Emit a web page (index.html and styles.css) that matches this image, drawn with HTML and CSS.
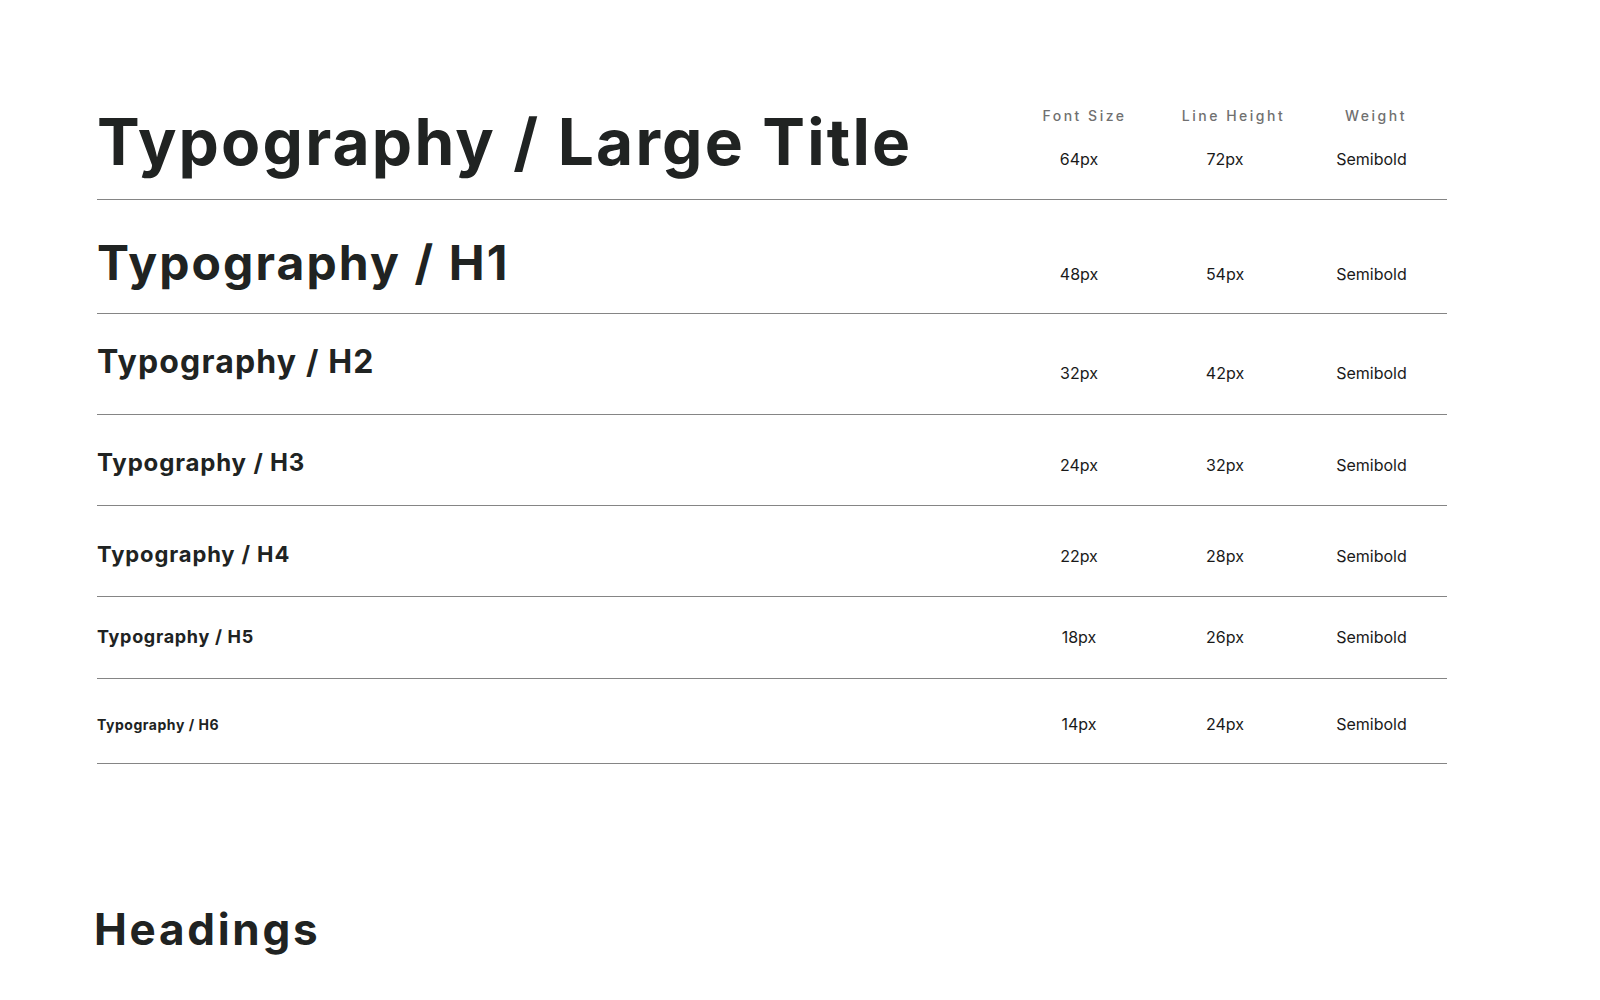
FILE: index.html
```html
<!DOCTYPE html>
<html lang="en">
<head>
<meta charset="utf-8">
<title>Typography</title>
<link rel="stylesheet" href="styles.css">
</head>
<body>
<main class="page">
  <section class="type-table">
    <div class="row row--lead">
      <div class="title t-large">Typography / Large Title</div>
      <div class="hdr hdr--a">Font Size</div>
      <div class="hdr hdr--b">Line Height</div>
      <div class="hdr hdr--c">Weight</div>
      <div class="val">64px</div>
      <div class="val">72px</div>
      <div class="val">Semibold</div>
    </div>
    <div class="row row--h1">
      <div class="title t-h1">Typography / H1</div>
      <div class="val">48px</div>
      <div class="val">54px</div>
      <div class="val">Semibold</div>
    </div>
    <div class="row row--h2">
      <div class="title t-h2">Typography / H2</div>
      <div class="val">32px</div>
      <div class="val">42px</div>
      <div class="val">Semibold</div>
    </div>
    <div class="row row--h3">
      <div class="title t-h3">Typography / H3</div>
      <div class="val">24px</div>
      <div class="val">32px</div>
      <div class="val">Semibold</div>
    </div>
    <div class="row row--h4">
      <div class="title t-h4">Typography / H4</div>
      <div class="val">22px</div>
      <div class="val">28px</div>
      <div class="val">Semibold</div>
    </div>
    <div class="row row--h5">
      <div class="title t-h5">Typography / H5</div>
      <div class="val">18px</div>
      <div class="val">26px</div>
      <div class="val">Semibold</div>
    </div>
    <div class="row row--h6">
      <div class="title t-h6">Typography / H6</div>
      <div class="val">14px</div>
      <div class="val">24px</div>
      <div class="val">Semibold</div>
    </div>
  </section>
  <h2 class="section-title">Headings</h2>
</main>
</body>
</html>
```
FILE: styles.css
```css
html, body {
  margin: 0;
  padding: 0;
  background: #ffffff;
}

body {
  font-family: Inter, "Noto Sans", "Liberation Sans", sans-serif;
  color: #202322;
}

.page {
  width: 1350px;
  padding: 106px 0 0 97px;
}

.row {
  display: grid;
  grid-template-columns: 1fr 150px 142px 151px;
  align-items: baseline;
  border-bottom: 1px solid #858585;
}

.title {
  font-weight: 700;
  letter-spacing: 0.036em;
  color: #202322;
  white-space: nowrap;
}

.t-large { font-size: 64px; line-height: 72px; letter-spacing: 0.034em; }
.t-h1 { font-size: 48px; line-height: 54px; letter-spacing: 0.044em; }
.t-h2 { font-size: 32px; line-height: 42px; letter-spacing: 0.036em; }
.t-h3 { font-size: 24px; line-height: 32px; letter-spacing: 0.035em; }
.t-h4 { font-size: 22px; line-height: 28px; letter-spacing: 0.04em; }
.t-h5 { font-size: 18px; line-height: 26px; letter-spacing: 0.038em; }
.t-h6 { font-size: 14px; line-height: 24px; letter-spacing: 0.038em; }

.val {
  font-size: 16px;
  line-height: 24px;
  font-weight: 400;
  color: #1a1a1a;
  text-align: center;
}

.hdr {
  font-size: 14px;
  line-height: 20px;
  font-weight: 500;
  letter-spacing: 2.5px;
  color: #707070;
  text-align: center;
  white-space: nowrap;
}
.hdr--a { padding-left: 11px; }
.hdr--b { padding-left: 17px; }
.hdr--c { padding-left: 9px; }

/* lead row: title spans header + value lines */
.row--lead {
  grid-template-rows: 20px 52px;
  align-items: start;
  padding-bottom: 21px;
}
.row--lead .title { grid-row: span 2; }
.row--lead .val { margin-top: 21px; }

.row--h1 { padding: 35.5px 0 23.5px; }
.row--h2 { padding: 27.4px 0 28.6px; align-items: end; }
.row--h2 .title { margin-bottom: 2px; }
.row--h3 { padding: 32px 0 26px; }
.row--h4 { padding: 34.3px 0 27.7px; }
.row--h5 { padding: 27.5px 0 27.5px; }
.row--h6 { padding: 32.7px 0 26.6px; }

.section-title {
  margin: 139px 0 0 -3px;
  font-size: 44px;
  line-height: 52px;
  font-weight: 700;
  letter-spacing: 0.062em;
  color: #202322;
}
```
